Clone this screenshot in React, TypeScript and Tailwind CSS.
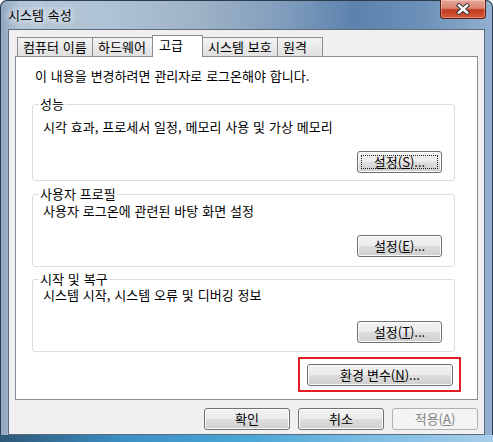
import React from "react";
import clsx from "clsx";

// Windows 7 style push button
interface WinButtonProps {
  children: React.ReactNode;
  className?: string;
  focused?: boolean;
  disabled?: boolean;
}

function WinButton({ children, className, focused, disabled }: WinButtonProps) {
  return (
    <button
      disabled={disabled}
      className={clsx(
        "relative h-[22px] rounded-[3px] border flex items-center justify-center leading-[14px] text-[13px]",
        disabled
          ? "border-[#adb2b5] bg-[#f4f4f4] text-[#838383]"
          : "border-[#707070] bg-[linear-gradient(180deg,#f2f2f2_0%,#ebebeb_48%,#dddddd_52%,#cfcfcf_100%)] shadow-[inset_0_0_0_1px_#fbfbfb] text-black",
        focused && "border-[#3c7fb1] shadow-[inset_0_0_0_1px_#a6e3f8]",
        className
      )}
    >
      {focused && (
        <span className="absolute inset-[3px] border border-dotted border-[#222]" />
      )}
      <span className="relative">{children}</span>
    </button>
  );
}

// Group box built on fieldset / legend
interface GroupProps {
  title: string;
  text: string;
  button: React.ReactNode;
  className: string;
  textClass: string;
  buttonClass: string;
  bottomClass: string;
}

function Group({ title, text, button, className, textClass, buttonClass, bottomClass }: GroupProps) {
  return (
    <fieldset className={clsx("w-[423px] border border-[#d5dfe5] rounded-[3px] p-0 m-0", className)}>
      <legend className="ml-[6px] px-[1px] leading-[14px]">{title}</legend>
      <div className={clsx("pl-[10px] pr-[12px]", bottomClass)}>
        <p className={textClass}>{text}</p>
        <div className={clsx("flex justify-end", buttonClass)}>{button}</div>
      </div>
    </fieldset>
  );
}

function CloseButton() {
  return (
    <div className="w-[46px] h-[19px] rounded-b-[4px] border border-t-0 border-[#5a2019] bg-[linear-gradient(180deg,#e8a596_0%,#d98572_45%,#c23a1d_55%,#d4583a_100%)] shadow-[inset_0_0_0_1px_rgba(255,255,255,0.3)] flex items-center justify-center">
      <svg width="18" height="12" viewBox="0 0 18 12">
        <path d="M5 2.5 L13 9.5 M13 2.5 L5 9.5" stroke="#3a3a3a" strokeWidth="4.4" strokeLinecap="square" />
        <path d="M5 2.5 L13 9.5 M13 2.5 L5 9.5" stroke="#ffffff" strokeWidth="2.4" strokeLinecap="square" />
      </svg>
    </div>
  );
}

const TABS = [
  { label: "컴퓨터 이름", w: "w-[76px]" },
  { label: "하드웨어", w: "w-[61px]" },
  { label: "고급", w: "w-[51px]", active: true },
  { label: "시스템 보호", w: "w-[76px]" },
  { label: "원격", w: "w-[46px]" },
];

export default function App() {
  return (
    <div className="w-[493px] h-[442px] flex flex-col overflow-hidden rounded-t-[7px] bg-[linear-gradient(90deg,#8fa6be_0%,#b3c5d7_4%,#aec3d3_22%,#9fb3c6_40%,#7f9cbc_58%,#5c82ad_72%,#6d91b9_86%,#93b0cf_100%)] shadow-[inset_0_0_0_1px_#2b3c4f] [font-family:'Noto_Sans_CJK_KR',sans-serif] text-[13px] leading-[14px] [word-spacing:1px] text-black">
      {/* Title bar */}
      <div className="h-[29px] flex justify-between items-start pl-[8px] pr-[7px]">
        <span className="mt-[8px] [text-shadow:0_0_6px_#fff,0_0_10px_#fff]">시스템 속성</span>
        <CloseButton />
      </div>

      {/* Client area */}
      <div className="mx-[8px] flex-1 border border-[#5d6c7d] bg-[#f0f0f0] pt-[5px]">
        {/* Tabs */}
        <div className="relative z-10 flex items-end pl-[8px] -mb-px">
          {TABS.map((tab, i) => (
            <div
              key={tab.label}
              className={clsx(
                "border-[#898c95] whitespace-nowrap",
                tab.w,
                i > 0 && "-ml-px",
                tab.active
                  ? "relative z-10 h-[22px] border border-b-0 bg-white pl-[6px] pt-[2px]"
                  : "h-[20px] border bg-[linear-gradient(180deg,#f4f4f4_0%,#e9e9e9_50%,#e0e0e0_100%)] pl-[5px] pt-[2px]"
              )}
            >
              {tab.label}
            </div>
          ))}
        </div>

        {/* Tab panel */}
        <div className="ml-[6px] w-[463px] h-[344px] border border-[#898c95] bg-white pt-[12px] pl-[16px]">
          <p className="ml-[3px]">이 내용을 변경하려면 관리자로 로그온해야 합니다.</p>

          <Group
            title="성능"
            text="시각 효과, 프로세서 일정, 메모리 사용 및 가상 메모리"
            className="mt-[14px]"
            textClass="mt-[9px]"
            buttonClass="mt-[17px]"
            bottomClass="pb-[7px]"
            button={
              <WinButton focused className="w-[85px]">
                설정(<u>S</u>)...
              </WinButton>
            }
          />

          <Group
            title="사용자 프로필"
            text="사용자 로그온에 관련된 바탕 화면 설정"
            className="mt-[6px]"
            textClass="mt-[3px]"
            buttonClass="mt-[17px]"
            bottomClass="pb-[9px]"
            button={
              <WinButton className="w-[85px]">
                설정(<u>E</u>)...
              </WinButton>
            }
          />

          <Group
            title="시작 및 복구"
            text="시스템 시작, 시스템 오류 및 디버깅 정보"
            className="mt-[5px]"
            textClass="mt-[2px]"
            buttonClass="mt-[19px]"
            bottomClass="pb-[8px]"
            button={
              <WinButton className="w-[85px]">
                설정(<u>T</u>)...
              </WinButton>
            }
          />

          {/* Environment variables, highlighted */}
          <div className="w-[423px] flex justify-end mt-[5px]">
            <div className="-mr-[6px] border-2 border-[#e11d25] pl-[7px] pr-[6px] pt-[5px] pb-[4px]">
              <WinButton className="w-[146px]">
                환경 변수(<u>N</u>)...
              </WinButton>
            </div>
          </div>
        </div>

        {/* Dialog buttons */}
        <div className="ml-[6px] w-[463px] mt-[8px] flex justify-end gap-[8px]">
          <WinButton className="w-[86px]">확인</WinButton>
          <WinButton className="w-[86px]">취소</WinButton>
          <WinButton disabled className="w-[86px]">
            적용(<u>A</u>)
          </WinButton>
        </div>
      </div>

      {/* Bottom frame */}
      <div className="h-[7px] bg-[linear-gradient(90deg,#2f5878_0%,#3b8fc4_25%,#4aa7d6_50%,#7dbde4_75%,#a7cde9_100%)]" />
    </div>
  );
}
